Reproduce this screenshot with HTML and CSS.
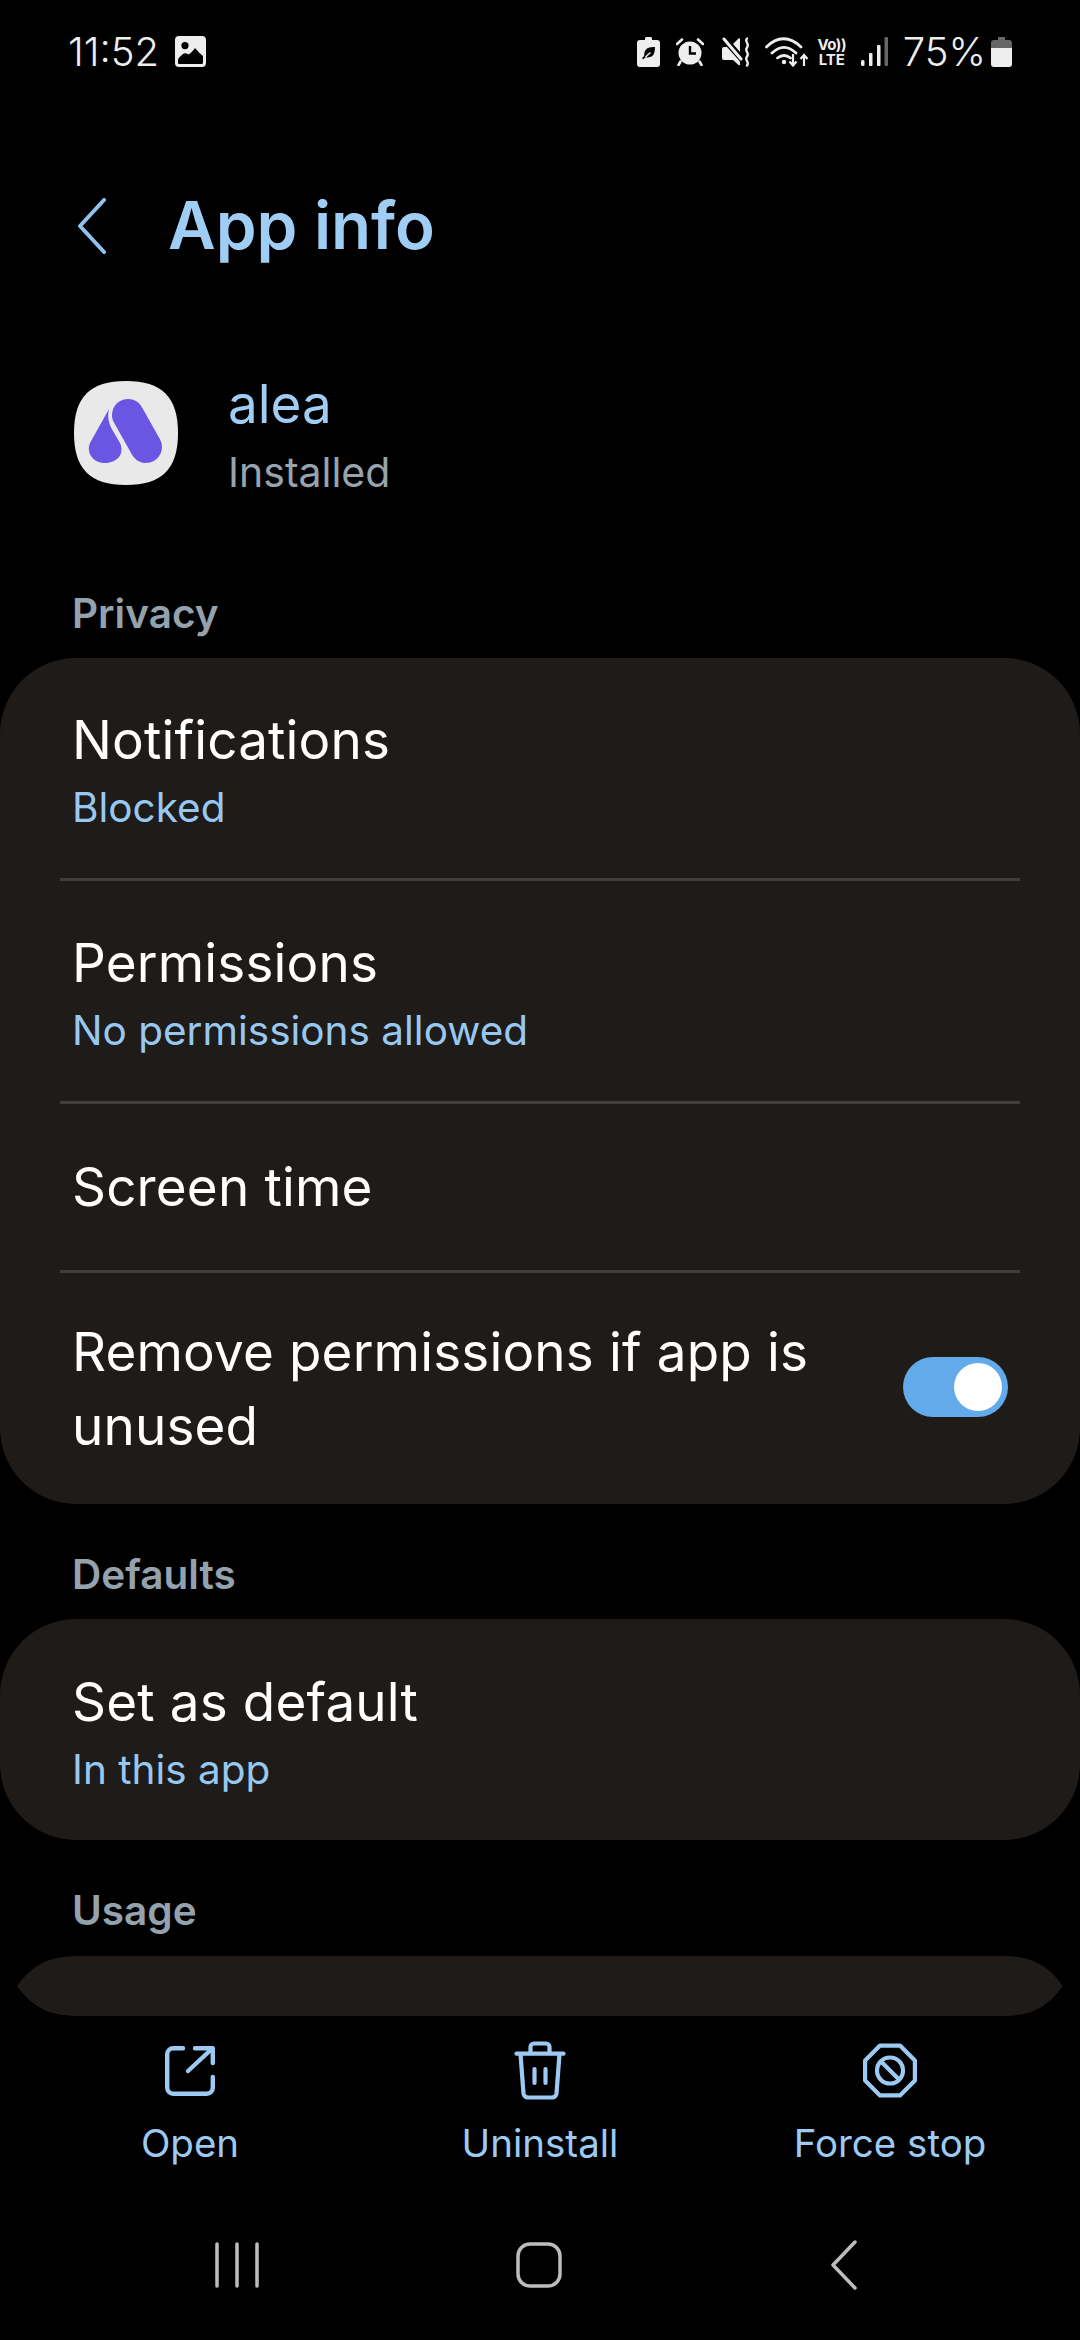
FILE: index.html
```html
<!DOCTYPE html>
<html lang="en">
<head>
<meta charset="utf-8">
<title>App info</title>
<link rel="stylesheet" href="styles.css">
</head>
<body>
<div class="screen">
  <header class="status">
    <div class="status-left">
      <span class="time">11:52</span>
      <svg class="ic-gallery" viewBox="0 0 31 31"><path fill-rule="evenodd" d="M4 0h23a4 4 0 0 1 4 4v23a4 4 0 0 1-4 4H4a4 4 0 0 1-4-4V4a4 4 0 0 1 4-4ZM10 6a3.6 3.6 0 1 0 0 7.200a3.600 3.600 0 0 0 0-7.200ZM3 26.500c0 1 .6 1.500 1.500 1.500h22c1 0 1.500-.6 1.500-1.500v-6.500c-3-2-5-5-8-8-2 3-4 5-6.500 6.500-2-1-4-2-6 0-2 1.500-3.500 3-4.500 5Z" fill="#eee"/></svg>
    </div>
    <div class="status-right">
      <svg class="ic-batleaf" viewBox="0 0 23 30"><path fill="#eee" d="M8 1.500C8 .6 8.600 0 9.500 0h4c.9 0 1.500.6 1.500 1.500V3h5a3 3 0 0 1 3 3v21a3 3 0 0 1-3 3H3a3 3 0 0 1-3-3V6a3 3 0 0 1 3-3h5Z"/><path fill="#000" d="M18 10c-5.500 0-9.500 1-10.500 5.500-.4 1.800-.3 2.800-.3 3.500L5 21l1 1.300 2.700-2c4.500.7 7.800-1 8.600-4.500.4-1.800.7-3.700.7-5.800Z"/><path stroke="#eee" stroke-width="1.500" d="M8.500 20l5-4.500"/></svg>
      <svg class="ic-alarm" viewBox="0 0 28 28"><circle cx="14" cy="15" r="11.500" fill="#eee"/><path d="M14 8v7.500h6" fill="none" stroke="#000" stroke-width="2.400"/><path d="M1 6l5-4.500M27 6l-5-4.500M4.500 23.500 2.500 27M23.500 23.500l2 3.500" stroke="#eee" stroke-width="2.600" stroke-linecap="round"/></svg>
      <svg class="ic-mute" viewBox="0 0 30 30"><path fill="#eee" d="M1 12a2 2 0 0 1 2-2h3L19 24.500v3c0 .8-1 1.100-1.500.5L12 23H3a2 2 0 0 1-2-2Z"/><path fill="#eee" d="M12 7 17.500 1.500C18 1 19 1.200 19 2V15Z"/><path d="M3 2 20 22" stroke="#eee" stroke-width="3" stroke-linecap="round"/><path d="M26 1.500c-3 3 3 5 0 9s3 5 0 9 3 5 0 9" fill="none" stroke="#eee" stroke-width="2.400" stroke-linecap="round"/></svg>
      <svg class="ic-wifi" viewBox="0 0 44 30"><path d="M1.500 10C12-1 25-1 36 10M7 16c8-7.500 16-7.500 24 0M12.500 21c4.500-3.500 8.500-3.500 13 0" fill="none" stroke="#eee" stroke-width="2.800" stroke-linecap="round"/><circle cx="19" cy="25" r="2.200" fill="#eee"/><path d="M28 17v11M24.500 24.500l3.500 4 3.500-4M39 29V18M35.500 22l3.500-4 3.500 4" fill="none" stroke="#eee" stroke-width="2.200"/></svg>
      <span class="volte"><span class="vo">Vo))</span><span class="lte">LTE</span></span>
      <svg class="ic-signal" viewBox="0 0 27 30"><rect x="0" y="23" width="3.500" height="6" rx="1.500" fill="#eee"/><rect x="8" y="16" width="3.500" height="13" rx="1" fill="#eee"/><rect x="16" y="8" width="3.500" height="21" rx="1" fill="#eee"/><rect x="23.500" y="0" width="3.500" height="29" rx="1" fill="#666"/></svg>
      <span class="pct">75%</span>
      <svg class="ic-bat" viewBox="0 0 21 30"><path fill="#666" d="M7 0h7v3h4a3 3 0 0 1 3 3v5H0V6a3 3 0 0 1 3-3h4Z"/><path fill="#eee" d="M0 11h21v16a3 3 0 0 1-3 3H3a3 3 0 0 1-3-3Z"/></svg>
    </div>
  </header>

  <div class="appbar">
    <svg class="back" viewBox="0 0 30 56"><path d="M27 2 3 28l24 26" fill="none" stroke="#8fc2ee" stroke-width="4" stroke-linecap="round" stroke-linejoin="round"/></svg>
    <h1 class="title">App info</h1>
  </div>

  <div class="app-head">
    <svg class="app-icon" viewBox="0 0 104 104">
      <path fill="#e9e9e9" d="M52 0C88 0 104 16 104 52C104 88 88 104 52 104C16 104 0 88 0 52C0 16 16 0 52 0Z"/>
      <path d="M54 34 72 66" stroke="#6a56e2" stroke-width="32" stroke-linecap="round"/>
      <path fill="#6a56e2" d="M35 28C33 37 35 43 39 50L46 62C51 73 43 82 31 82C19 82 12 72 16 62Z"/>
    </svg>
    <div class="app-text">
      <div class="app-name">alea</div>
      <div class="app-state">Installed</div>
    </div>
  </div>

  <div class="label label-privacy">Privacy</div>
  <section class="card">
    <div class="row row-two">
      <div class="row-title">Notifications</div>
      <div class="row-sub">Blocked</div>
    </div>
    <div class="divider"></div>
    <div class="row row-two">
      <div class="row-title">Permissions</div>
      <div class="row-sub">No permissions allowed</div>
    </div>
    <div class="divider"></div>
    <div class="row row-one">
      <div class="row-title">Screen time</div>
    </div>
    <div class="divider"></div>
    <div class="row row-switch">
      <div class="row-title row-wrap">Remove permissions if app is unused</div>
      <div class="switch"><span class="knob"></span></div>
    </div>
  </section>

  <div class="label label-defaults">Defaults</div>
  <section class="card">
    <div class="row row-two row-solo">
      <div class="row-title">Set as default</div>
      <div class="row-sub">In this app</div>
    </div>
  </section>

  <div class="label label-usage">Usage</div>
  <svg class="usage-card" viewBox="0 0 1046 60" preserveAspectRatio="none"><path fill="#1f1b18" d="M0 30C12 14 26 0 60 0H986C1020 0 1034 14 1046 30C1034 46 1020 60 986 60H60C26 60 12 46 0 30Z"/></svg>

  <nav class="actions">
    <div class="action">
      <svg class="act-icon" viewBox="0 0 58 58"><path d="M22 7.200H12.200a6 6 0 0 0-6 6V46.800a6 6 0 0 0 6 6H45.800a6 6 0 0 0 6-6V36M34 7.200H51.800V22M50.700 8 27 30" fill="none" stroke="#9ccaf2" stroke-width="4.400" stroke-linecap="round" stroke-linejoin="round"/></svg>
      <span class="act-label">Open</span>
    </div>
    <div class="action">
      <svg class="act-icon" viewBox="0 0 58 58"><path d="M5.500 12.700H52.500M19.500 12V6a3.500 3.500 0 0 1 3.500-3.500H35A3.500 3.500 0 0 1 38.500 6v6M9.500 13l3 39.500a4.500 4.500 0 0 0 4.500 4H41a4.500 4.500 0 0 0 4.500-4l3-39.500M23.500 28V42M34.500 28V42" fill="none" stroke="#9ccaf2" stroke-width="4.200" stroke-linecap="round" stroke-linejoin="round"/></svg>
      <span class="act-label">Uninstall</span>
    </div>
    <div class="action">
      <svg class="act-icon" viewBox="0 0 58 58"><path d="M19 4.600H39L53.900 19.500V39.500L39 54.400H19L4.100 39.500V19.500Z" fill="none" stroke="#9ccaf2" stroke-width="4.200" stroke-linejoin="round"/><circle cx="29" cy="29.500" r="13" fill="none" stroke="#9ccaf2" stroke-width="4.200"/><path d="M20 20.500 38 38.500" stroke="#9ccaf2" stroke-width="4.200"/></svg>
      <span class="act-label">Force stop</span>
    </div>
  </nav>

  <footer class="navbar">
    <svg class="nav-recent" viewBox="0 0 44 46"><path d="M2 2V44M22 2V44M42 2V44" stroke="#bdbdbd" stroke-width="3.500" stroke-linecap="round"/></svg>
    <svg class="nav-home" viewBox="0 0 46 46"><rect x="2" y="2" width="42" height="42" rx="12" fill="none" stroke="#bdbdbd" stroke-width="3.500"/></svg>
    <svg class="nav-back" viewBox="0 0 28 50"><path d="M25 2 3 25l22 23" fill="none" stroke="#bdbdbd" stroke-width="3.500" stroke-linecap="round" stroke-linejoin="round"/></svg>
  </footer>
</div>
</body>
</html>
```
FILE: styles.css
```css
* { box-sizing: border-box; }
html, body { margin: 0; padding: 0; background: #000; }
body { font-family: Inter, "Noto Sans", sans-serif; color: #fff; }
.screen { width: 1080px; height: 2340px; display: flex; flex-direction: column; overflow: hidden; background: #000; }

/* status bar */
.status { height: 72px; padding: 31px 68px 0 68px; display: flex; justify-content: space-between; align-items: center; }
.status-left { display: flex; align-items: center; gap: 16px; }
.time { font-size: 40px; font-weight: 300; color: #eee; line-height: 43px; }
.ic-gallery { width: 31px; height: 31px; }
.status-right { display: flex; align-items: center; }
.ic-batleaf { width: 23px; height: 30px; margin-right: 16px; }
.ic-alarm { width: 28px; height: 28px; margin-right: 17px; }
.ic-mute { width: 30px; height: 30px; margin-right: 14px; }
.ic-wifi { width: 44px; height: 30px; margin-right: 8px; }
.volte { width: 30px; display: flex; flex-direction: column; align-items: center; color: #eee; font-weight: 700; margin-right: 14px; }
.vo { font-size: 15px; line-height: 15px; letter-spacing: -0.5px; }
.lte { font-size: 15px; line-height: 15px; }
.ic-signal { width: 27px; height: 30px; margin-right: 15px; }
.pct { font-size: 40px; font-weight: 300; color: #eee; line-height: 43px; margin-right: 5px; }
.ic-bat { width: 21px; height: 30px; }

/* app bar */
.appbar { margin-top: 76px; height: 155px; padding: 0 0 0 77px; display: flex; align-items: center; gap: 61px; }
.back { width: 30px; height: 56px; }
.title { margin: 0; font-size: 65.500px; font-weight: 600; color: #a0cdf4; line-height: 76px; }

/* app head */
.app-head { margin-top: 78px; padding-left: 74px; display: flex; align-items: center; gap: 50px; height: 104px; }
.app-icon { width: 104px; height: 104px; }
.app-text { display: flex; flex-direction: column; padding-top: 4px; }
.app-name { font-size: 53px; color: #a0cdf4; line-height: 60px; }
.app-state { font-size: 41px; color: #97a3ad; line-height: 48px; margin-top: 14px; }

/* sections */
.label { padding-left: 72px; font-size: 40.500px; font-weight: 600; color: #94a2ae; line-height: 46px; }
.label-privacy { margin-top: 106px; margin-bottom: 21px; }
.label-defaults { margin-top: 48px; margin-bottom: 21px; }
.label-usage { margin-top: 48px; margin-bottom: 22px; }
.card { background: #1f1b18; border-radius: 76px; }
.row { padding: 0 72px; display: flex; }
.row-two { height: 220px; padding-top: 6px; flex-direction: column; justify-content: center; }
.row-solo { height: 221px; }
.row-one { height: 166px; align-items: center; }
.row-switch { height: 231px; align-items: center; justify-content: space-between; }
.row-title { font-size: 53px; line-height: 60px; letter-spacing: 0.15px; color: #fff; }
.row-wrap { width: 760px; line-height: 74px; }
.row-sub { font-size: 40.500px; line-height: 48px; color: #97c8f2; margin-top: 14px; }
.divider { height: 3px; margin: 0 60px; background: #403d3b; }
.switch { width: 105px; height: 60px; margin-bottom: 3px; border-radius: 30px; background: #62aaea; padding: 6px; display: flex; justify-content: flex-end; }
.knob { width: 48px; height: 48px; border-radius: 50%; background: #fff; }
.usage-card { width: 1046px; height: 60px; margin: 0 17px; display: block; }

/* bottom actions */
.actions { margin-top: 25px; padding: 0 15px; display: flex; }
.action { flex: 1; display: flex; flex-direction: column; align-items: center; }
.act-icon { width: 58px; height: 58px; overflow: visible; }
.act-label { margin-top: 21px; font-size: 38.500px; color: #9ccaf2; line-height: 46px; }

/* nav bar */
.navbar { margin-top: 74px; height: 50px; display: flex; align-items: center; }
.nav-recent { width: 44px; height: 46px; margin-left: 215px; }
.nav-home { width: 46px; height: 46px; margin-left: 257px; }
.nav-back { width: 28px; height: 50px; margin-left: 268px; }
```
